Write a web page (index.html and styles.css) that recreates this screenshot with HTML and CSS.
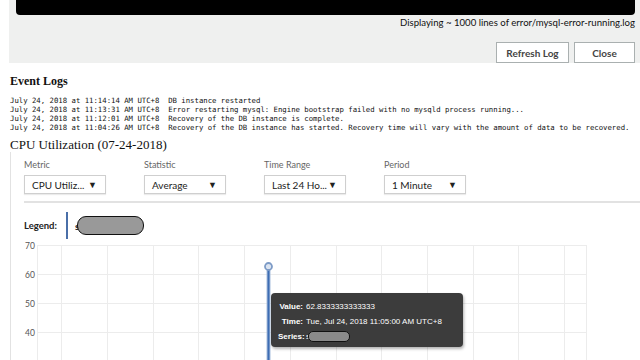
FILE: index.html
```html
<!DOCTYPE html>
<html>
<head>
<meta charset="utf-8">
<link rel="stylesheet" href="styles.css">
</head>
<body>
<div class="log-panel">
  <div class="log-view"></div>
  <div class="log-caption">Displaying ~ 1000 lines of error/mysql-error-running.log</div>
  <div class="log-actions">
    <button class="btn btn-refresh">Refresh Log</button>
    <button class="btn btn-close">Close</button>
  </div>
</div>
<main class="content">
  <h2 class="section-title">Event Logs</h2>
  <pre class="events">July 24, 2018 at 11:14:14 AM UTC+8  DB instance restarted
July 24, 2018 at 11:13:31 AM UTC+8  Error restarting mysql: Engine bootstrap failed with no mysqld process running...
July 24, 2018 at 11:12:01 AM UTC+8  Recovery of the DB instance is complete.
July 24, 2018 at 11:04:26 AM UTC+8  Recovery of the DB instance has started. Recovery time will vary with the amount of data to be recovered.</pre>
  <h2 class="cpu-title">CPU Utilization (07-24-2018)</h2>
  <div class="metric-panel">
    <div class="filters">
      <div class="field">
        <div class="field-label">Metric</div>
        <div class="select"><span>CPU Utiliz...</span><span class="caret">▼</span></div>
      </div>
      <div class="field">
        <div class="field-label">Statistic</div>
        <div class="select"><span>Average</span><span class="caret">▼</span></div>
      </div>
      <div class="field">
        <div class="field-label">Time Range</div>
        <div class="select"><span>Last 24 Ho...</span><span class="caret">▼</span></div>
      </div>
      <div class="field">
        <div class="field-label">Period</div>
        <div class="select"><span>1 Minute</span><span class="caret">▼</span></div>
      </div>
    </div>
    <div class="divider"></div>
    <div class="legend">
      <span class="legend-label">Legend:</span>
      <span class="legend-bar"></span>
      <span class="legend-s">s</span>
      <span class="redact"></span>
    </div>
    <div class="chart">
      <svg class="chart-svg" width="616" height="120" viewBox="0 0 616 120">
        <g stroke="#ececec" stroke-width="1">
          <line x1="13" y1="5.5" x2="562" y2="5.5"/>
          <line x1="13" y1="34.5" x2="562" y2="34.5"/>
          <line x1="13" y1="63.5" x2="562" y2="63.5"/>
          <line x1="13" y1="92.5" x2="562" y2="92.5"/>
          <line x1="13.5" y1="5" x2="13.5" y2="120"/>
          <line x1="37.5" y1="5" x2="37.5" y2="120"/>
          <line x1="83.5" y1="5" x2="83.5" y2="120"/>
          <line x1="129.5" y1="5" x2="129.5" y2="120"/>
          <line x1="174.5" y1="5" x2="174.5" y2="120"/>
          <line x1="220.5" y1="5" x2="220.5" y2="120"/>
          <line x1="266.5" y1="5" x2="266.5" y2="120"/>
          <line x1="312.5" y1="5" x2="312.5" y2="120"/>
          <line x1="357.5" y1="5" x2="357.5" y2="120"/>
          <line x1="403.5" y1="5" x2="403.5" y2="120"/>
          <line x1="449.5" y1="5" x2="449.5" y2="120"/>
          <line x1="494.5" y1="5" x2="494.5" y2="120"/>
          <line x1="540.5" y1="5" x2="540.5" y2="120"/>
          <line x1="562.5" y1="5" x2="562.5" y2="120"/>
        </g>
        <g class="axis-text" fill="#555">
          <text x="1" y="9">70</text>
          <text x="1" y="38">60</text>
          <text x="1" y="67">50</text>
          <text x="1" y="96">40</text>
        </g>
        <line x1="244.5" y1="27" x2="244.5" y2="120" stroke="#a9bedd" stroke-width="4"/>
        <line x1="244.5" y1="27" x2="244.5" y2="120" stroke="#3d6db3" stroke-width="2"/>
        <circle cx="244.5" cy="26.5" r="3.5" fill="#dbe4f1" stroke="#7d9bc6" stroke-width="1.8"/>
      </svg>
      <div class="tooltip">
        <span class="tt-label">Value:</span><span class="tt-value">62.8333333333333</span>
        <span class="tt-label">Time:</span><span class="tt-value">Tue, Jul 24, 2018 11:05:00 AM UTC+8</span>
        <span class="tt-label">Series:</span><span class="tt-value tt-series">s<span class="redact redact-small"></span></span>
      </div>
    </div>
  </div>
</main>
</body>
</html>
```
FILE: styles.css
```css
html, body {
  margin: 0;
  padding: 0;
  background: #ffffff;
  overflow: hidden;
}
body {
  font-family: "Lato", "Liberation Sans", sans-serif;
  color: #222;
  width: 640px;
  height: 360px;
}

.log-panel {
  margin-left: 9px;
  height: 63px;
  background: #eff0ef;
  padding: 0 5px 0 7px;
  box-sizing: border-box;
  display: flex;
  flex-direction: column;
}
.log-view {
  height: 15px;
  background: #000;
  border-radius: 0 0 4px 4px;
}
.log-caption {
  margin-top: 2px;
  text-align: right;
  font-size: 9.6px;
  line-height: 11px;
  color: #111;
}
.log-actions {
  margin-top: auto;
  display: flex;
  justify-content: flex-end;
  gap: 5px;
}
.btn {
  height: 21px;
  padding: 0;
  background: #fff;
  border: 1px solid #aab0b0;
  font-family: "Lato", "Liberation Sans", sans-serif;
  font-weight: 700;
  font-size: 10px;
  color: #444;
}
.btn-refresh { width: 73px; }
.btn-close { width: 61px; }

.content {
  padding-left: 10px;
}
.section-title {
  margin: 11px 0 0;
  font-family: "Liberation Serif", serif;
  font-weight: 700;
  font-size: 12px;
  line-height: 14px;
  color: #111;
}
.events {
  margin: 8px 0 0;
  font-family: "DejaVu Sans Mono", monospace;
  font-size: 7.3px;
  line-height: 9px;
  color: #111;
}
.cpu-title {
  margin: 5px 0 0;
  font-family: "Liberation Serif", serif;
  font-weight: 400;
  font-size: 13px;
  line-height: 15px;
  color: #111;
}

.metric-panel {
  border-left: 1px solid #e2e2e2;
  padding-left: 13px;
}
.filters {
  display: flex;
  gap: 38px;
  padding-top: 7px;
}
.field {
  width: 82px;
}
.field-label {
  font-size: 9px;
  line-height: 12px;
  color: #666;
  margin-bottom: 4px;
}
.select {
  box-sizing: border-box;
  height: 19px;
  border: 1px solid #cfcfcf;
  box-shadow: 0 1px 1px rgba(0, 0, 0, 0.08);
  display: flex;
  align-items: center;
  justify-content: space-between;
  padding: 0 8px 0 7px;
  font-size: 10px;
  color: #222;
  background: #fff;
  white-space: nowrap;
}
.caret {
  font-size: 9px;
  color: #222;
}
.divider {
  margin-top: 7px;
  height: 2px;
  background: #e2e2e2;
}
.legend {
  margin-top: 9px;
  height: 27px;
  display: flex;
  align-items: center;
}
.legend-label {
  font-weight: 700;
  font-size: 9.5px;
  color: #222;
}
.legend-bar {
  width: 2px;
  height: 27px;
  background: #4a6fa8;
  margin-left: 9px;
}
.legend-s {
  margin-left: 7px;
  font-size: 10px;
  font-weight: 700;
}
.redact {
  display: inline-block;
  box-sizing: border-box;
  width: 67px;
  height: 19px;
  margin-left: -2px;
  background: #999;
  border: 1.5px solid #111;
  border-radius: 9px;
}

.chart {
  position: relative;
  margin-top: 1px;
  height: 120px;
}
.chart-svg {
  display: block;
}
.axis-text {
  font-family: "Lato", "Liberation Sans", sans-serif;
  font-size: 8.5px;
}
.tooltip {
  position: absolute;
  left: 247px;
  top: 53px;
  width: 192px;
  height: 54px;
  box-sizing: border-box;
  background: #3c3c3c;
  border-radius: 4px;
  box-shadow: 1px 2px 3px rgba(0, 0, 0, 0.3);
  padding: 6px 0 0 7px;
  display: grid;
  grid-template-columns: 25px 1fr;
  grid-auto-rows: 15px;
  column-gap: 3px;
  align-items: center;
  font-family: "Liberation Sans", sans-serif;
  font-size: 8px;
  color: #fff;
}
.tt-label {
  text-align: right;
  font-weight: 700;
}
.tt-series {
  display: flex;
  align-items: center;
}
.redact-small {
  width: 42px;
  height: 11px;
  border-radius: 5px;
  margin-left: -2px;
  background: #8a8a8a;
}
```
